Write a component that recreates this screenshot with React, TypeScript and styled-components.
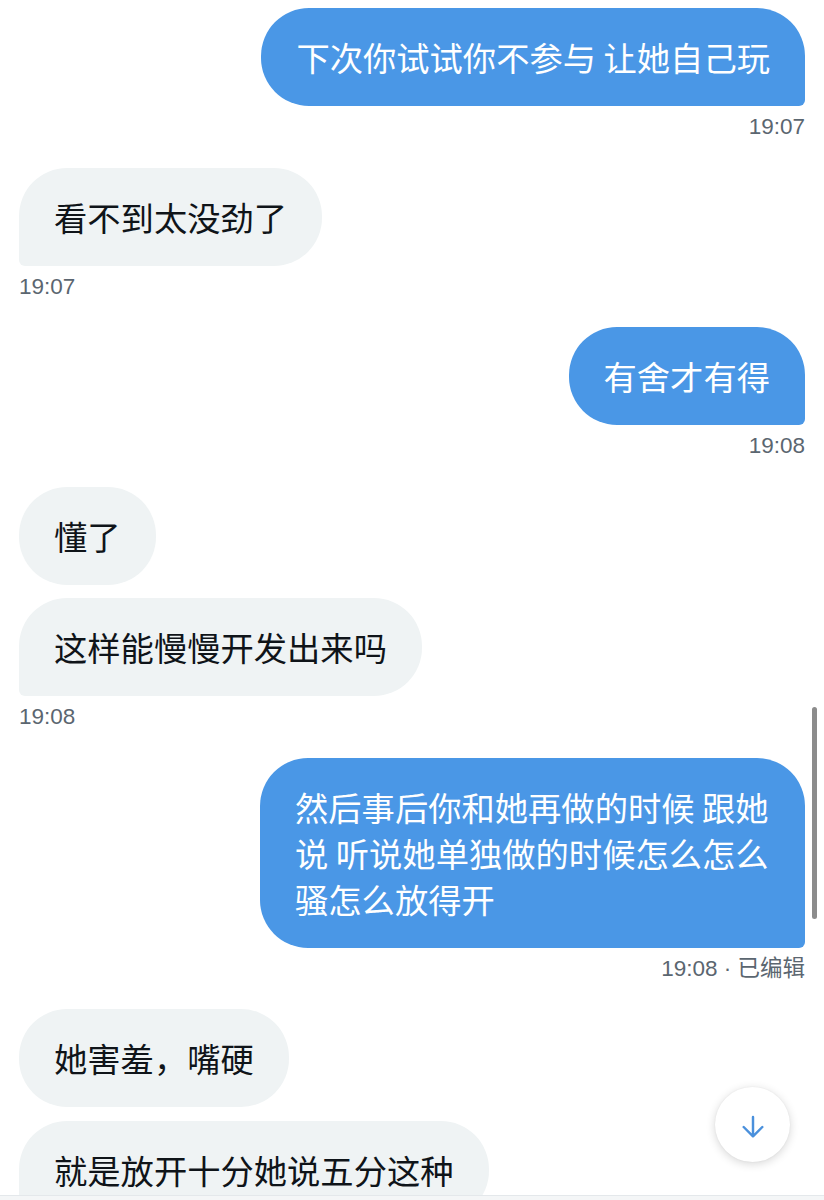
import { FunctionComponent } from "react";
import styled, { createGlobalStyle } from "styled-components";

type Side = "in" | "out";

interface Group {
  side: Side;
  lines: string[];
  time: string;
}

const groups: Group[] = [
  { side: "out", lines: ["下次你试试你不参与 让她自己玩"], time: "19:07" },
  { side: "in", lines: ["看不到太没劲了"], time: "19:07" },
  { side: "out", lines: ["有舍才有得"], time: "19:08" },
  { side: "in", lines: ["懂了", "这样能慢慢开发出来吗"], time: "19:08" },
  {
    side: "out",
    lines: ["然后事后你和她再做的时候 跟她说 听说她单独做的时候怎么怎么骚怎么放得开"],
    time: "19:08 · 已编辑",
  },
  { side: "in", lines: ["她害羞，嘴硬", "就是放开十分她说五分这种"], time: "" },
];

const GlobalStyle = createGlobalStyle`
  html, body {
    margin: 0;
    padding: 0;
    background: #ffffff;
  }
  * {
    box-sizing: border-box;
  }
`;

const Screen = styled.div`
  height: 1200px;
  display: flex;
  flex-direction: column;
  overflow: hidden;
  background: #ffffff;
  font-family: "Noto Sans CJK SC", "Noto Sans", sans-serif;
`;

const Thread = styled.div`
  position: relative;
  flex: 1;
  overflow: hidden;
  padding: 8px 19px 0;
`;

const MessageGroup = styled.div<{ $side: Side }>`
  display: flex;
  flex-direction: column;
  align-items: ${(p) => (p.$side === "out" ? "flex-end" : "flex-start")};
  gap: 13.5px;
  & + & {
    margin-top: 27.5px;
  }
`;

const Bubble = styled.div<{ $side: Side; $tail: boolean }>`
  max-width: 545px;
  padding: 26px 35px;
  font-size: 33.3px;
  line-height: 46px;
  color: ${(p) => (p.$side === "out" ? "#ffffff" : "#0f1419")};
  background: ${(p) => (p.$side === "out" ? "#4a97e6" : "#eff3f4")};
  border-radius: 48px;
  ${(p) =>
    p.$tail && p.$side === "out" ? "border-bottom-right-radius: 6px;" : ""}
  ${(p) =>
    p.$tail && p.$side === "in" ? "border-bottom-left-radius: 6px;" : ""}
`;

const Stamp = styled.div`
  margin-top: -5.5px;
  font-family: "Liberation Sans", "Noto Sans CJK SC", sans-serif;
  font-size: 22.5px;
  line-height: 26px;
  color: #5b6670;
`;

const ScrollThumb = styled.div`
  position: absolute;
  top: 707px;
  right: 7px;
  width: 5px;
  height: 212px;
  border-radius: 3px;
  background: #8c8c8c;
`;

const DownButton = styled.div`
  position: absolute;
  right: 34px;
  bottom: 33px;
  width: 75px;
  height: 75px;
  border-radius: 50%;
  background: #ffffff;
  box-shadow: 0 2px 10px rgba(0, 0, 0, 0.16), 0 0 2px rgba(0, 0, 0, 0.06);
  display: flex;
  align-items: center;
  justify-content: center;
  padding-top: 4px;
`;

const Composer = styled.div`
  height: 5px;
  flex-shrink: 0;
  border-top: 1px solid #e4e8eb;
  background: #f4f6f7;
`;

const ArrowDown = () => (
  <svg width="28" height="28" viewBox="0 0 24 24" fill="none">
    <path
      d="M12 3.5v16.5M4 12l8 8 8-8"
      stroke="#4a90dc"
      strokeWidth="2.1"
      strokeLinecap="round"
      strokeLinejoin="round"
    />
  </svg>
);

const App: FunctionComponent = () => {
  return (
    <Screen>
      <GlobalStyle />
      <Thread>
        {groups.map((group, gi) => (
          <MessageGroup key={gi} $side={group.side}>
            {group.lines.map((line, li) => (
              <Bubble
                key={li}
                $side={group.side}
                $tail={li === group.lines.length - 1}
              >
                {line}
              </Bubble>
            ))}
            {group.time && <Stamp>{group.time}</Stamp>}
          </MessageGroup>
        ))}
        <ScrollThumb />
        <DownButton>
          <ArrowDown />
        </DownButton>
      </Thread>
      <Composer />
    </Screen>
  );
};

export default App;
